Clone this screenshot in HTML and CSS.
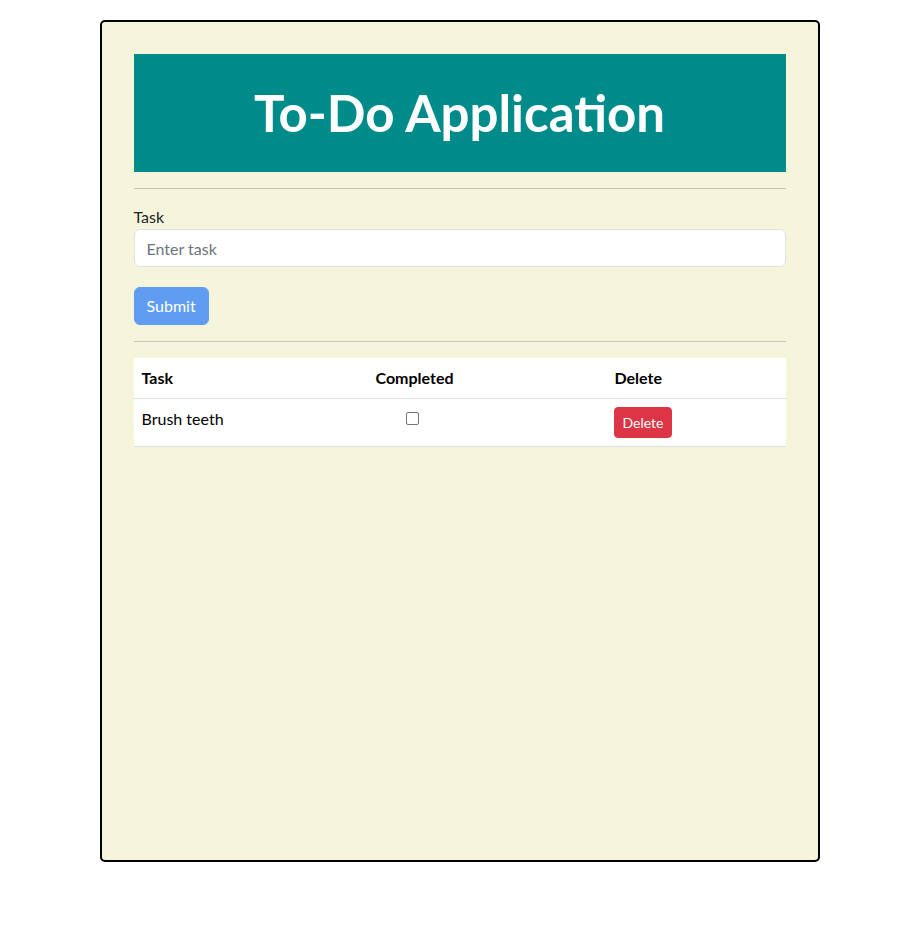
FILE: index.html
```html
<!DOCTYPE html>
<html lang="en">
<head>
<meta charset="utf-8">
<title>To-Do Application</title>
<link rel="stylesheet" href="styles.css">
</head>
<body>
<div class="app">
  <header class="banner"><h1>To-Do Application</h1></header>
  <hr class="rule">
  <form class="task-form">
    <label class="label" for="task">Task</label>
    <input class="input" id="task" type="text" placeholder="Enter task">
    <button class="btn-submit" type="button" disabled>Submit</button>
  </form>
  <hr class="rule">
  <table class="table">
    <thead>
      <tr><th class="c1">Task</th><th class="c2">Completed</th><th class="c3">Delete</th></tr>
    </thead>
    <tbody>
      <tr>
        <td>Brush teeth</td>
        <td><span class="check"></span></td>
        <td><button class="btn-delete" type="button">Delete</button></td>
      </tr>
    </tbody>
  </table>
</div>
</body>
</html>
```
FILE: styles.css
```css
* { box-sizing: border-box; }
html, body { margin: 0; padding: 0; background: #fff; }
body {
  font-family: Lato, "Noto Sans", "Liberation Sans", sans-serif;
  font-size: 16px;
  line-height: 1.5;
  color: #212529;
}
.app {
  width: 720px;
  height: 842px;
  margin: 20px auto 0;
  border: 2px solid #000;
  border-radius: 5px;
  background: #f5f5dc;
  padding: 32px;
}
.banner {
  background: #008b8b;
  padding: 30px 0;
  text-align: center;
}
.banner h1 {
  margin: 0;
  color: #fff;
  font-size: 51px;
  line-height: 58px;
  font-weight: 700;
}
.rule {
  margin: 16px 0;
  border: 0;
  border-top: 1px solid #c4c4bc;
}
.task-form { display: flex; flex-direction: column; align-items: flex-start; }
.label { display: block; line-height: 24px; }
.input {
  width: 100%;
  height: 38px;
  padding: 6px 12px;
  font: inherit;
  color: #212529;
  background: #fff;
  border: 1px solid #dee2e6;
  border-radius: 6px;
  outline: none;
}
.input::placeholder { color: #6c757d; }
.btn-submit {
  margin-top: 20px;
  height: 38px;
  padding: 6px 12px;
  font: inherit;
  color: #fff;
  background: #5e9df1;
  border: 1px solid #5e9df1;
  border-radius: 6px;
}
.table {
  width: 100%;
  border-collapse: collapse;
  background: #fff;
  color: #000;
  vertical-align: top;
}
.table th, .table td {
  padding: 8px;
  text-align: left;
  border-bottom: 1px solid #dee2e6;
  vertical-align: top;
}
.table th { font-weight: 700; }
.c1 { width: 234px; }
.c2 { width: 239px; }
.check {
  display: inline-block;
  width: 13px;
  height: 13px;
  margin: 5px 0 0 30px;
  border: 1px solid #767676;
  border-radius: 2px;
  background: #fff;
  vertical-align: top;
}
.btn-delete {
  display: block;
  height: 31px;
  padding: 4px 8px;
  margin-left: -1px;
  font: inherit;
  font-size: 14px;
  line-height: 21px;
  color: #fff;
  background: #dc3545;
  border: 1px solid #dc3545;
  border-radius: 4px;
}
```
